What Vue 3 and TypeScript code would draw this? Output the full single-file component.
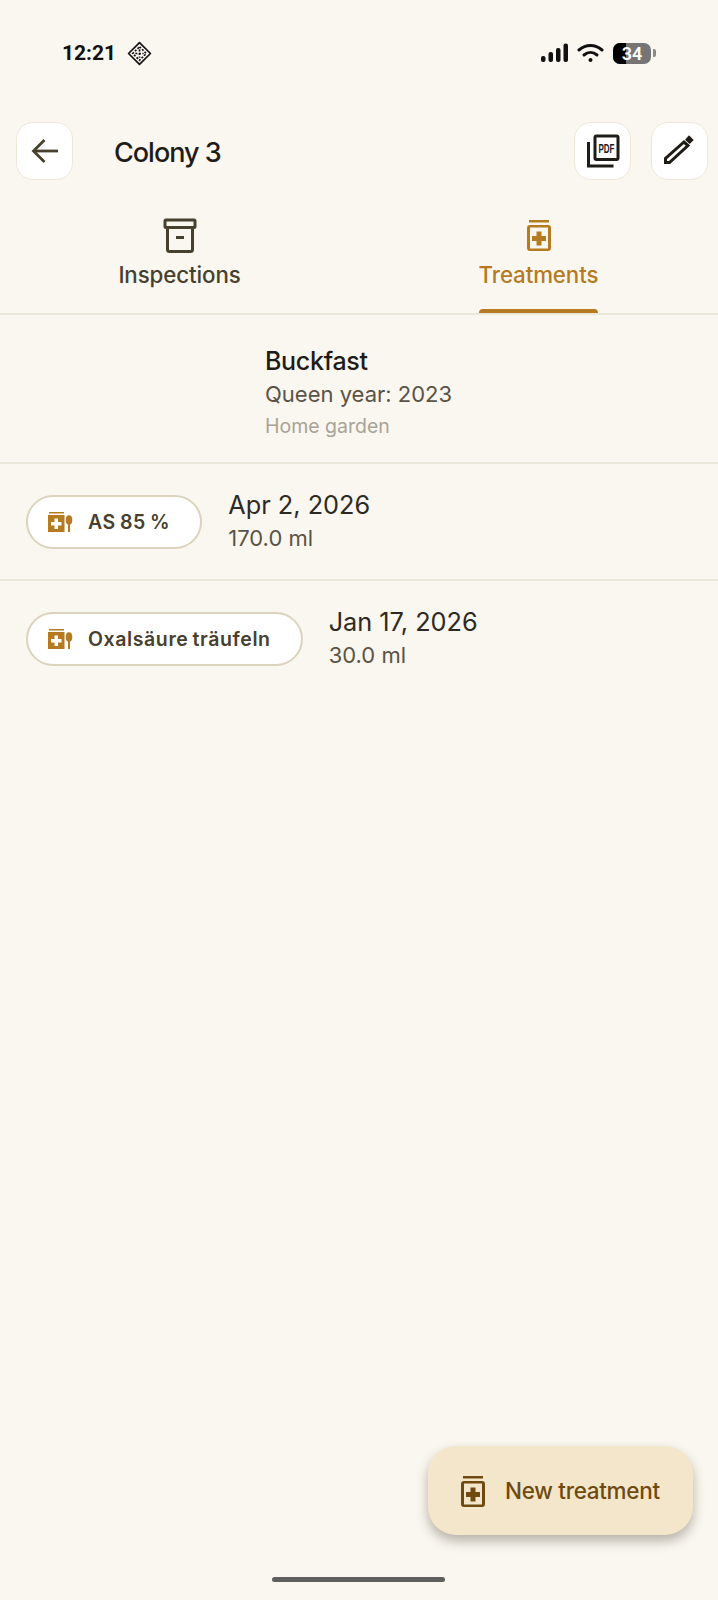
<template>
  <div class="page">
    <!-- Status bar -->
    <div class="status-bar">
      <div class="status-left">
        <span class="clock">12:21</span>
        <svg class="status-app" width="25" height="25" viewBox="0 0 24 24">
          <path d="M12 1.500 22.500 12 12 22.500 1.500 12Z" fill="none" stroke="#111" stroke-width="1.600" stroke-linejoin="round" />
          <path d="M12 5.500 18.500 12 12 18.500 5.500 12Z" fill="none" stroke="#111" stroke-width="1.600" stroke-dasharray="2 1.400" />
          <path d="M8 12h8M12 8v8" stroke="#111" stroke-width="1.600" stroke-dasharray="2 1.400" />
        </svg>
      </div>
      <div class="status-right">
        <svg width="28" height="20" viewBox="0 0 28 20" fill="#111">
          <rect x="0" y="13" width="4.500" height="6" rx="2" />
          <rect x="7.500" y="9" width="4.500" height="10" rx="2" />
          <rect x="15" y="5" width="4.500" height="14" rx="2" />
          <rect x="22.500" y="0.500" width="4.500" height="18.500" rx="2" />
        </svg>
        <svg class="wifi" width="27" height="20" viewBox="0 0 27 20" fill="none" stroke="#111" stroke-width="3" stroke-linecap="round">
          <path d="M2 7c7-6 16-6 23 0" />
          <path d="M7 12c4-3.400 9-3.400 13 0" />
          <circle cx="13.500" cy="17" r="2" fill="#111" stroke="none" />
        </svg>
        <div class="battery">
          <div class="battery-fill"></div>
          <span class="battery-level">34</span>
        </div>
        <div class="battery-cap"></div>
      </div>
    </div>

    <!-- Header -->
    <header class="top-bar">
      <button class="square-btn">
        <svg width="30" height="30" viewBox="0 0 30 30" fill="none" stroke="#47402f" stroke-width="2.800">
          <path d="M28 15H4" />
          <path d="M14.500 4 3.500 15l11 11" />
        </svg>
      </button>
      <h1 class="title">Colony 3</h1>
      <button class="square-btn action-pdf">
        <svg width="34" height="34" viewBox="0 0 34 34" fill="none" stroke="#1f1c17" stroke-width="3">
          <rect x="9" y="2" width="23" height="23.500" rx="1.500" />
          <path d="M2.500 8v24h25" />
          <text transform="translate(20.500 18.500) scale(0.64 1)" class="pdf-text">PDF</text>
        </svg>
      </button>
      <button class="square-btn action-edit">
        <svg width="34" height="34" viewBox="0 0 34 34" fill="#1f1c17">
          <path d="M2.500 28.500v-4L21 8l4 3.500L6.500 28.500Z" fill="none" stroke="#1f1c17" stroke-width="3" />
          <path d="m22 5.700 4-4.400 4.700 4.700-4 4Z" />
        </svg>
      </button>
    </header>

    <!-- Tabs -->
    <nav class="tabs">
      <div class="tab">
        <svg width="40" height="40" viewBox="0 0 40 40" fill="none" stroke="#47402f" stroke-width="3">
          <rect x="5" y="5" width="30" height="7.500" rx="1" />
          <path d="M7.500 13v21.500a2 2 0 0 0 2 2h21a2 2 0 0 0 2-2V13" />
          <path d="M16 22.500h8" />
        </svg>
        <span class="tab-label">Inspections</span>
      </div>
      <div class="tab tab-active">
        <svg width="40" height="40" viewBox="0 0 40 40" fill="#b67a21">
          <path d="M10 5h20v2.500H10Z" />
          <path fill-rule="evenodd" d="M11 10h18a3 3 0 0 1 3 3v20a3 3 0 0 1-3 3H11a3 3 0 0 1-3-3V13a3 3 0 0 1 3-3Zm0 2.500v21h18v-21Z" />
          <path d="M17.500 16.500h5v4.500h4.500v5h-4.500v4.500h-5V26H13v-5h4.500Z" />
        </svg>
        <span class="tab-label">Treatments</span>
        <div class="tab-indicator"></div>
      </div>
    </nav>

    <!-- Colony info -->
    <section class="colony">
      <div class="colony-breed">Buckfast</div>
      <div class="colony-queen">Queen year: 2023</div>
      <div class="colony-place">Home garden</div>
    </section>

    <!-- Treatments -->
    <div v-for="item in treatments" :key="item.date" class="row">
      <div class="chip">
        <svg width="25" height="20" viewBox="0 0 25 20" fill="#b67a21">
          <path d="M1 0h15v1.500H1Z" />
          <path fill-rule="evenodd" d="M0 3h16.500v17H0Zm6.500 3.500v3.500H3v3.500h3.500V17H10v-3.500h3.500V10H10V6.500Z" />
          <ellipse cx="21" cy="8" rx="3.300" ry="4.800" />
          <path d="M20 12h2v8h-2Z" />
        </svg>
        <span class="chip-label">{{ item.name }}</span>
      </div>
      <div class="row-text">
        <div class="row-date">{{ item.date }}</div>
        <div class="row-amount">{{ item.amount }}</div>
      </div>
    </div>

    <!-- Floating action -->
    <button class="fab">
      <svg width="40" height="40" viewBox="0 0 40 40" fill="#6f4a10">
        <path d="M10 5h20v2.500H10Z" />
        <path fill-rule="evenodd" d="M11 10h18a3 3 0 0 1 3 3v20a3 3 0 0 1-3 3H11a3 3 0 0 1-3-3V13a3 3 0 0 1 3-3Zm0 2.500v21h18v-21Z" />
        <path d="M17.500 16.500h5v4.500h4.500v5h-4.500v4.500h-5V26H13v-5h4.500Z" />
      </svg>
      <span class="fab-label">New treatment</span>
    </button>

    <div class="home-indicator"></div>
  </div>
</template>

<script setup lang="ts">
interface Treatment {
  name: string
  date: string
  amount: string
}

const treatments: Treatment[] = [
  { name: 'AS 85 %', date: 'Apr 2, 2026', amount: '170.0 ml' },
  { name: 'Oxalsäure träufeln', date: 'Jan 17, 2026', amount: '30.0 ml' },
]
</script>

<style>
body {
  background: #faf7f0;
}
</style>

<style scoped>
.page {
  position: relative;
  width: 718px;
  height: 1600px;
  overflow: hidden;
  background: #faf7f0;
  font-family: Inter, "Noto Sans", sans-serif;
  color: #1f1c17;
}

.status-bar {
  display: flex;
  align-items: center;
  justify-content: space-between;
  height: 106px;
  padding: 0 62px 0 62px;
  box-sizing: border-box;
}

.status-left {
  display: flex;
  align-items: center;
  gap: 11px;
}

.clock {
  font-size: 21px;
  font-weight: 700;
  color: #111;
  font-family: Roboto, sans-serif;
}

.status-right {
  display: flex;
  align-items: center;
}

.wifi {
  margin-left: 8px;
}

.battery {
  position: relative;
  width: 38px;
  height: 21px;
  margin-left: 9px;
  border-radius: 7px;
  background: #757575;
  overflow: hidden;
}

.battery-fill {
  width: 13px;
  height: 100%;
  background: #000;
}

.battery-level {
  position: absolute;
  inset: 0;
  text-align: center;
  font-size: 18px;
  line-height: 21px;
  font-weight: 600;
  color: #fff;
  font-family: Roboto, sans-serif;
}

.battery-cap {
  width: 3px;
  height: 8px;
  margin-left: 2px;
  border-radius: 0 2px 2px 0;
  background: #8a8a8a;
}

.top-bar {
  display: flex;
  align-items: center;
  height: 58px;
  margin-top: 16px;
  padding: 0 10px 0 16px;
  box-sizing: border-box;
}

.square-btn {
  display: flex;
  align-items: center;
  justify-content: center;
  width: 57px;
  height: 58px;
  padding: 0;
  background: #fff;
  border: 1.500px solid #efe8da;
  border-radius: 17px;
}

.title {
  flex: 1;
  margin: 2px 0 0 41px;
  font-size: 27px;
  font-weight: 500;
  letter-spacing: -1px;
}

.action-edit {
  margin-left: 20px;
}

.pdf-text {
  font-family: "Liberation Sans", sans-serif;
  font-size: 12.500px;
  font-weight: 700;
  fill: #1f1c17;
  stroke: none;
  text-anchor: middle;
}

.tabs {
  display: grid;
  grid-template-columns: 1fr 1fr;
  height: 135px;
  border-bottom: 2px solid #ece7db;
  box-sizing: border-box;
}

.tab {
  position: relative;
  display: flex;
  flex-direction: column;
  align-items: center;
  padding-top: 35px;
  color: #47402f;
}

.tab-label {
  margin-top: 6px;
  font-size: 22.300px;
  font-weight: 450;
  letter-spacing: -0.100px;
}

.tab-active {
  color: #b67a21;
}

.tab-indicator {
  position: absolute;
  bottom: 0;
  left: 120px;
  width: 119px;
  height: 4px;
  background: #b67a21;
  border-radius: 4px 4px 0 0;
}

.colony {
  padding: 30px 0 23px 265px;
  border-bottom: 2px solid #ece7db;
}

.colony-breed {
  font-size: 25px;
  font-weight: 500;
  letter-spacing: -0.300px;
  line-height: 32px;
}

.colony-queen {
  margin-top: 2px;
  font-size: 22px;
  line-height: 30px;
  color: #5a5346;
}

.colony-place {
  margin-top: 4px;
  font-size: 19.500px;
  line-height: 26px;
  color: #a8a396;
}

.row {
  display: flex;
  align-items: center;
  gap: 26px;
  height: 115px;
  padding-left: 26px;
  box-sizing: border-box;
}

.row + .row {
  height: 117px;
  border-top: 2px solid #ece7db;
}

.chip {
  display: flex;
  align-items: center;
  gap: 15px;
  height: 54px;
  padding: 0 30px 0 20px;
  background: #fff;
  border: 2px solid #dcd3bd;
  border-radius: 27px;
  box-sizing: border-box;
}

.chip-label {
  font-size: 19.500px;
  font-weight: 600;
  letter-spacing: 0.600px;
  word-spacing: -1.400px;
  color: #47402f;
}

.row-text {
  padding-bottom: 3px;
}

.row-date {
  font-size: 25.300px;
  line-height: 32px;
  color: #2e2a23;
}

.row-amount {
  margin-top: 3px;
  font-size: 22px;
  line-height: 28px;
  color: #5a5346;
}

.fab {
  position: absolute;
  left: 428px;
  top: 1446px;
  display: flex;
  align-items: center;
  gap: 12px;
  width: 265px;
  height: 89px;
  padding: 0 0 0 25px;
  background: #f4e6ca;
  border: none;
  border-radius: 28px;
  box-shadow: 0 6px 12px rgba(60, 50, 30, 0.35);
  font-family: inherit;
  box-sizing: border-box;
}

.fab-label {
  font-size: 22.500px;
  font-weight: 500;
  letter-spacing: -0.300px;
  color: #6f4a10;
}

.home-indicator {
  position: absolute;
  left: 272px;
  top: 1577px;
  width: 173px;
  height: 5px;
  border-radius: 3px;
  background: #5f5f5f;
}
</style>
